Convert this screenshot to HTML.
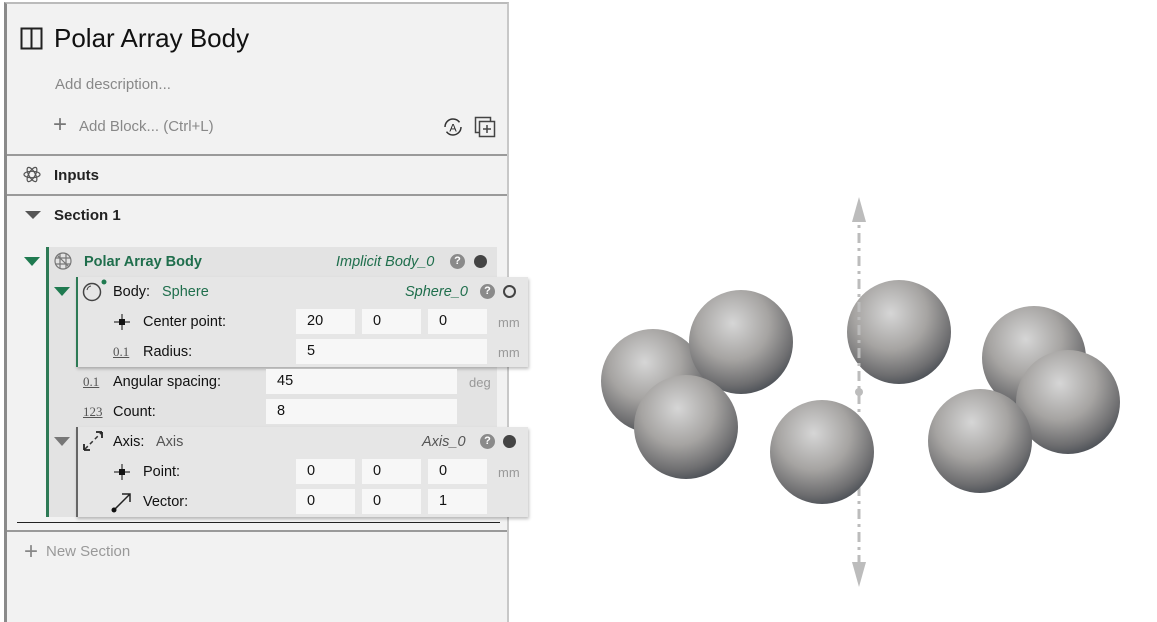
<!DOCTYPE html>
<html><head><meta charset="utf-8"><style>
*{margin:0;padding:0;box-sizing:border-box}
body{width:1157px;height:614px;background:#fff;font-family:"Liberation Sans",sans-serif;position:relative;overflow:hidden;color:#111}
.a{position:absolute}
.panel{left:4px;top:2px;width:505px;height:620px;background:#f2f2f2;border-left:3px solid #8a8a8a;border-top:2px solid #bbb;border-right:2px solid #c8c8c8}
.hl{height:2px;background:#9a9a9a}
.t{font-size:14.5px;white-space:nowrap}
.inp{background:#f7f7f7;height:25px;font-size:14.5px;padding:4px 0 0 11px;color:#111}
.unit{font-size:13px;color:#999}
.grn{color:#1f6e4c}
.q{width:15px;height:15px;border-radius:50%;background:#8a8a8a;color:#fff;font-size:11px;font-weight:bold;text-align:center;line-height:15px}
.dot{width:13px;height:13px;border-radius:50%;background:#444}
.tri{width:0;height:0;border-left:8px solid transparent;border-right:8px solid transparent}
</style></head><body>
<div class="a panel"></div>
<svg class="a" style="left:20px;top:27px" width="24" height="24"><rect x="1.5" y="1.5" width="20" height="20" fill="none" stroke="#222" stroke-width="2"/><line x1="11.5" y1="1" x2="11.5" y2="22" stroke="#222" stroke-width="2"/></svg>
<div class="a" style="left:54px;top:23px;font-size:26px;color:#111">Polar Array Body</div>
<div class="a t" style="left:55px;top:76px;font-size:15px;color:#888">Add description...</div>
<div class="a" style="left:53px;top:114px;font-size:24px;color:#777;line-height:22px">+</div>
<div class="a t" style="left:79px;top:118px;font-size:15px;color:#888">Add Block... (Ctrl+L)</div>
<svg class="a" style="left:442px;top:116px" width="22" height="22"><circle cx="11" cy="11" r="8" fill="none" stroke="#333" stroke-width="1.5" stroke-dasharray="20 5"/><text x="11" y="15.5" font-size="11" text-anchor="middle" font-family="Liberation Sans" fill="#222">A</text></svg>
<svg class="a" style="left:474px;top:116px" width="24" height="24"><rect x="1.5" y="1.5" width="15" height="15" fill="none" stroke="#444" stroke-width="1.5"/><rect x="5.5" y="5.5" width="15" height="15" fill="#f2f2f2" stroke="#444" stroke-width="1.5"/><path d="M13 9v8M9 13h8" stroke="#444" stroke-width="1.5"/></svg>
<div class="a hl" style="left:7px;top:154px;width:500px"></div>
<svg class="a" style="left:23px;top:165px" width="18" height="19"><g fill="none" stroke="#555" stroke-width="1.2"><ellipse cx="9" cy="9.5" rx="8" ry="3.2"/><ellipse cx="9" cy="9.5" rx="8" ry="3.2" transform="rotate(60 9 9.5)"/><ellipse cx="9" cy="9.5" rx="8" ry="3.2" transform="rotate(120 9 9.5)"/></g></svg>
<div class="a t" style="left:54px;top:167px;font-size:15px;font-weight:bold;color:#222">Inputs</div>
<div class="a hl" style="left:7px;top:194px;width:500px"></div>
<div class="a tri" style="left:25px;top:211px;border-top:8px solid #555"></div>
<div class="a t" style="left:54px;top:207px;font-size:15px;font-weight:bold;color:#222">Section 1</div>

<div class="a" style="left:46px;top:247px;width:451px;height:270px;background:#e3e3e3;border-left:3px solid #2d7a55"></div>
<div class="a tri" style="left:24px;top:257px;border-top:9px solid #1f7a50"></div>
<svg class="a" style="left:52px;top:250px" width="22" height="22"><g fill="none" stroke="#777" stroke-width="1.2"><circle cx="11" cy="11" r="8"/><path d="M3 8h16M3 14h16M8 3v16M14 3v16M5 5l12 12"/></g></svg>
<div class="a t grn" style="left:84px;top:254px;font-weight:bold">Polar Array Body</div>
<div class="a t grn" style="left:336px;top:254px;font-style:italic">Implicit Body_0</div>
<div class="a q" style="left:450px;top:254px">?</div>
<div class="a dot" style="left:474px;top:255px"></div>

<div class="a" style="left:76px;top:277px;width:452px;height:90px;background:#e6e6e6;border-left:2px solid #2d7a55;box-shadow:1px 2px 3px rgba(0,0,0,.25)"></div>
<div class="a tri" style="left:54px;top:287px;border-top:9px solid #1f7a50"></div>
<svg class="a" style="left:82px;top:278px" width="26" height="26"><circle cx="10" cy="14" r="8.5" fill="none" stroke="#444" stroke-width="1.5"/><path d="M5 12a5 5 0 0 1 4-4" stroke="#444" fill="none"/><circle cx="22" cy="4" r="2.5" fill="#1f7a50"/></svg>
<div class="a t" style="left:113px;top:284px">Body:</div>
<div class="a t grn" style="left:162px;top:284px">Sphere</div>
<div class="a t grn" style="left:405px;top:284px;font-style:italic">Sphere_0</div>
<div class="a q" style="left:480px;top:284px">?</div>
<div class="a" style="left:503px;top:285px;width:13px;height:13px;border-radius:50%;border:2.5px solid #444"></div>
<svg class="a" style="left:112px;top:312px" width="20" height="20"><path d="M10 2v16M2 10h16" stroke="#333" stroke-width="1.2"/><rect x="7" y="7" width="6" height="6" fill="#111"/></svg>
<div class="a t" style="left:143px;top:314px">Center point:</div>
<div class="a inp" style="left:296px;top:309px;width:59px">20</div>
<div class="a inp" style="left:362px;top:309px;width:59px">0</div>
<div class="a inp" style="left:428px;top:309px;width:59px">0</div>
<div class="a unit" style="left:498px;top:315px">mm</div>
<div class="a t" style="left:113px;top:344px;font-family:'Liberation Serif',serif;font-size:13px;color:#555;text-decoration:underline">0.1</div>
<div class="a t" style="left:143px;top:344px">Radius:</div>
<div class="a inp" style="left:296px;top:339px;width:191px">5</div>
<div class="a unit" style="left:498px;top:345px">mm</div>

<div class="a t" style="left:83px;top:374px;font-family:'Liberation Serif',serif;font-size:13px;color:#555;text-decoration:underline">0.1</div>
<div class="a t" style="left:113px;top:374px">Angular spacing:</div>
<div class="a inp" style="left:266px;top:369px;width:191px">45</div>
<div class="a unit" style="left:469px;top:375px">deg</div>
<div class="a t" style="left:83px;top:404px;font-family:'Liberation Serif',serif;font-size:13px;color:#555;text-decoration:underline">123</div>
<div class="a t" style="left:113px;top:404px">Count:</div>
<div class="a inp" style="left:266px;top:399px;width:191px">8</div>

<div class="a" style="left:76px;top:427px;width:452px;height:90px;background:#e6e6e6;border-left:2px solid #666;box-shadow:1px 2px 3px rgba(0,0,0,.25)"></div>
<div class="a tri" style="left:54px;top:437px;border-top:9px solid #777"></div>
<svg class="a" style="left:82px;top:430px" width="22" height="22"><path d="M3 19L19 3" stroke="#333" stroke-width="1.5" stroke-dasharray="4 3"/><path d="M2 20v-6M2 20h6M20 2v6M20 2h-6" stroke="#222" stroke-width="1.8"/></svg>
<div class="a t" style="left:113px;top:434px">Axis:</div>
<div class="a t" style="left:156px;top:434px;color:#555">Axis</div>
<div class="a t" style="left:422px;top:434px;font-style:italic;color:#555">Axis_0</div>
<div class="a q" style="left:480px;top:434px">?</div>
<div class="a dot" style="left:503px;top:435px"></div>
<svg class="a" style="left:112px;top:462px" width="20" height="20"><path d="M10 2v16M2 10h16" stroke="#333" stroke-width="1.2"/><rect x="7" y="7" width="6" height="6" fill="#111"/></svg>
<div class="a t" style="left:143px;top:464px">Point:</div>
<div class="a inp" style="left:296px;top:459px;width:59px">0</div>
<div class="a inp" style="left:362px;top:459px;width:59px">0</div>
<div class="a inp" style="left:428px;top:459px;width:59px">0</div>
<div class="a unit" style="left:498px;top:465px">mm</div>
<svg class="a" style="left:110px;top:490px" width="24" height="24"><path d="M4 20L20 4M12 4h8v8" stroke="#222" stroke-width="1.5" fill="none"/><circle cx="4" cy="20" r="2.5" fill="#111"/></svg>
<div class="a t" style="left:143px;top:494px">Vector:</div>
<div class="a inp" style="left:296px;top:489px;width:59px">0</div>
<div class="a inp" style="left:362px;top:489px;width:59px">0</div>
<div class="a inp" style="left:428px;top:489px;width:59px">1</div>

<div class="a" style="left:17px;top:522px;width:483px;height:1px;background:#222"></div>
<div class="a hl" style="left:7px;top:530px;width:500px"></div>
<div class="a" style="left:24px;top:541px;font-size:24px;color:#888;line-height:22px">+</div>
<div class="a t" style="left:46px;top:543px;font-size:15px;color:#999">New Section</div>

<svg class="a" style="left:0;top:0" width="1157" height="614">
<defs>
<radialGradient id="g" cx="0.42" cy="0.32" r="0.7">
<stop offset="0" stop-color="#d6d6d6"/><stop offset="0.5" stop-color="#a6a4a2"/><stop offset="0.85" stop-color="#6e6e70"/><stop offset="1" stop-color="#4e5258"/>
</radialGradient>
</defs>
<g fill="url(#g)">
<circle cx="653" cy="381" r="52"/><circle cx="741" cy="342" r="52"/><circle cx="686" cy="427" r="52"/>
<circle cx="899" cy="332" r="52"/>
</g>
<g stroke="#bcbcbc" stroke-width="3" fill="#bcbcbc">
<line x1="859" y1="210" x2="859" y2="575" stroke-dasharray="10 5 3 5"/>
<path d="M852 222L859 197L866 222Z" stroke="none"/>
<path d="M852 562L859 587L866 562Z" stroke="none"/>
<circle cx="859" cy="392" r="4" stroke="none"/>
</g>
<g fill="url(#g)">
<circle cx="822" cy="452" r="52"/>
<circle cx="1034" cy="358" r="52"/><circle cx="1068" cy="402" r="52"/><circle cx="980" cy="441" r="52"/>
</g>
</svg>
</body></html>
